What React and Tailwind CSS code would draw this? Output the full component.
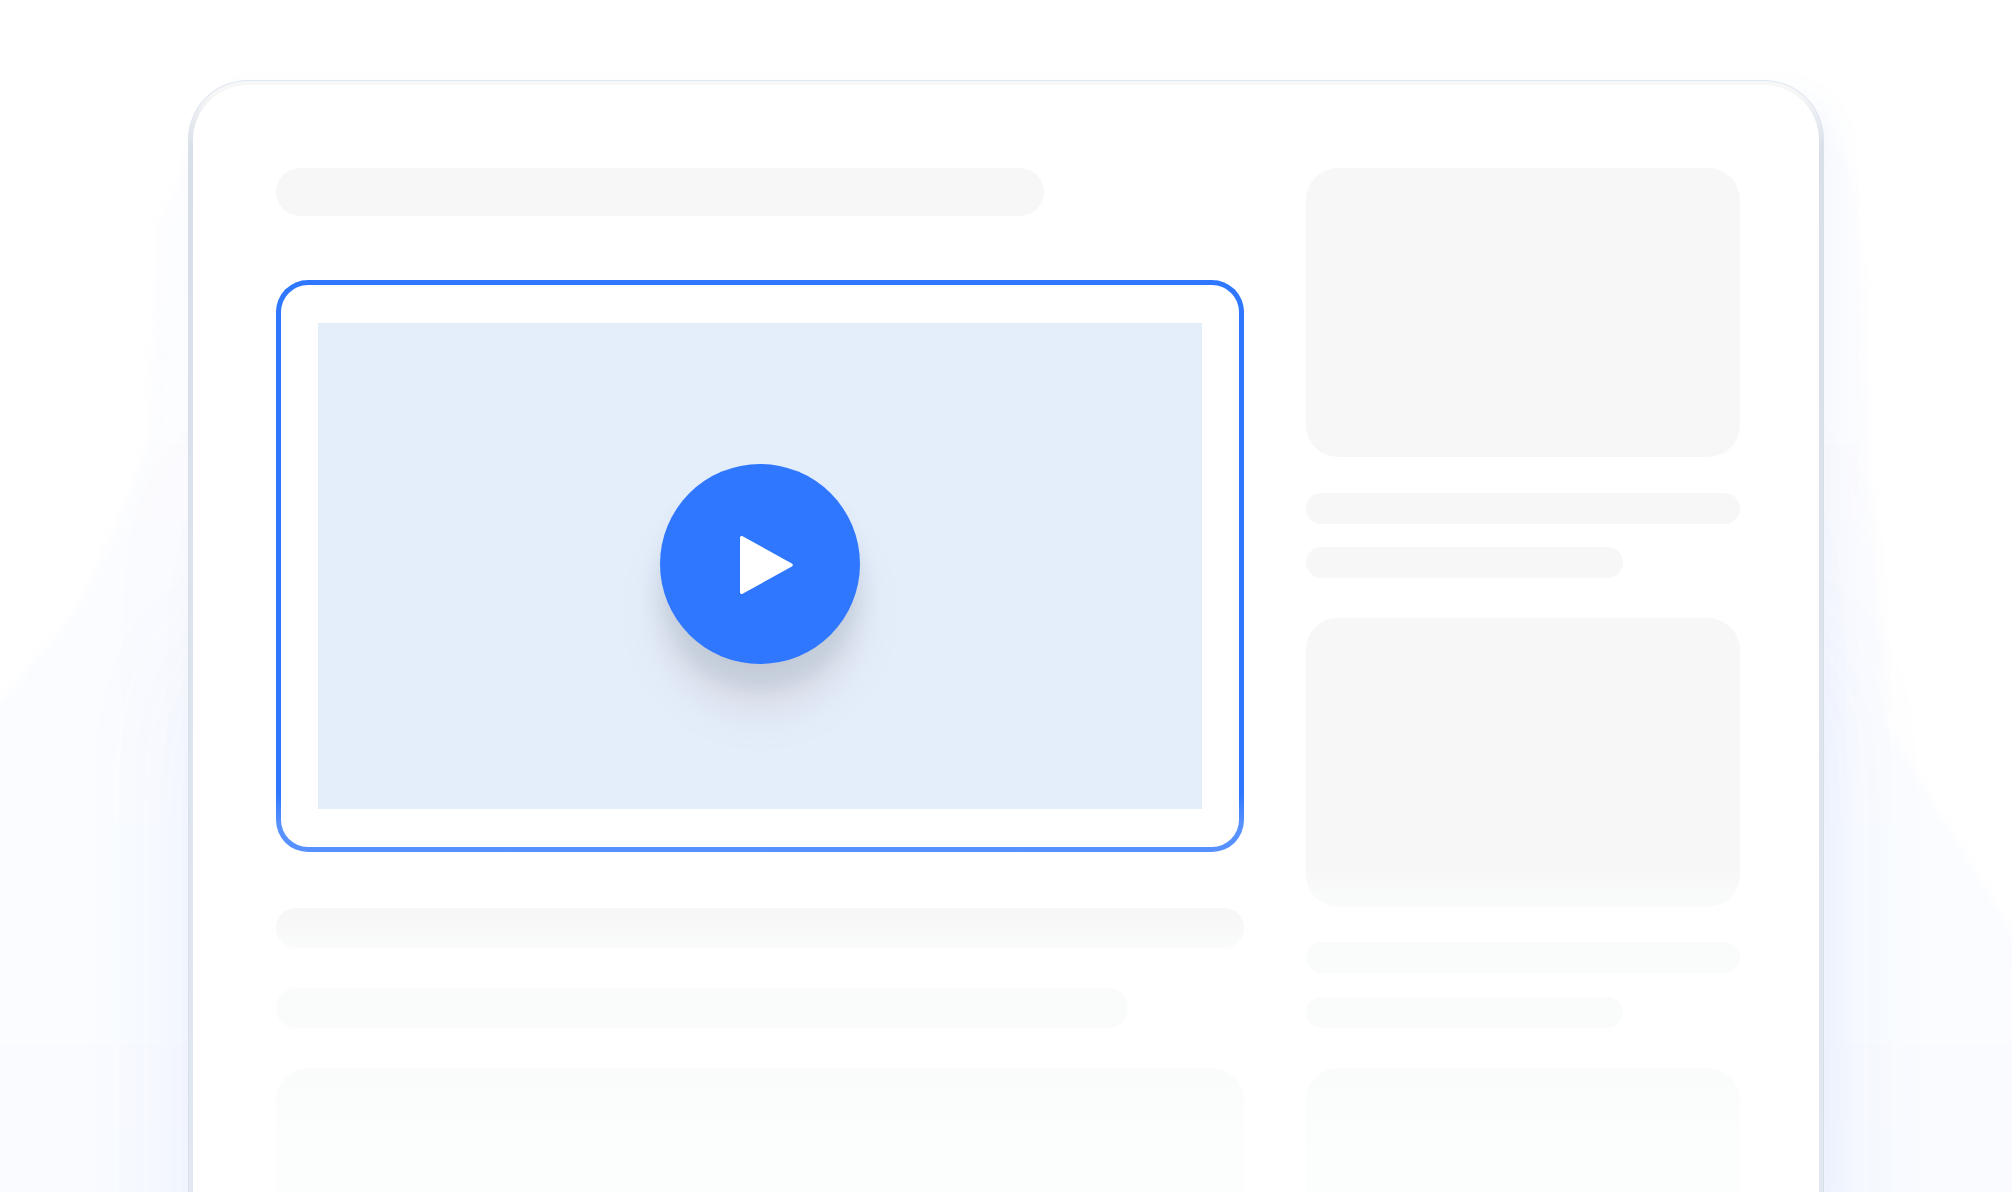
function Bar({ className }) {
  return <div className={`rounded-full ${className}`} />;
}

function VideoFrame() {
  return (
    <div className="mt-16 rounded-[32px] bg-linear-to-b from-[#2f77ff] from-90% to-[#5790ff] to-95% p-[5px]">
      <div className="rounded-[27px] bg-white px-[37px] py-[38px]">
        <div className="flex h-[486px] items-center justify-center bg-[#e4eefb] pb-1">
          <button
            type="button"
            aria-label="Play video"
            className="flex size-[200px] items-center justify-center rounded-full bg-[#2f77ff] pt-0.5 pl-3 shadow-[0_24px_20px_rgba(90,125,155,0.17),0_48px_44px_rgba(150,100,90,0.13)]"
          >
            <svg viewBox="0 0 53 58" className="h-[58px] w-[53px]" aria-hidden="true">
              <path
                d="M0 1.8C0 .3 1.3-.4 2.6.3L51.8 27.4C53.3 28.2 53.3 29.8 51.8 30.6L2.6 57.7C1.3 58.4 0 57.7 0 56.2Z"
                fill="#fff"
              />
            </svg>
          </button>
        </div>
      </div>
    </div>
  );
}

function Article() {
  return (
    <article className="flex flex-col">
      <Bar className="h-12 w-[79.3%] bg-[#f7f7f7]" />
      <VideoFrame />
      <Bar className="mt-14 h-10 bg-linear-to-b from-[#f7f7f7] from-20% to-[#fafbfb]" />
      <Bar className="mt-10 h-10 w-[88%] bg-[#fafcfb]" />
      <div className="mt-10 min-h-[124px] flex-1 rounded-t-[32px] bg-linear-to-b from-[#fafcfb] to-[#fcfefd] to-60%" />
    </article>
  );
}

function Sidebar() {
  return (
    <aside className="flex flex-col">
      <div className="h-[289px] rounded-[32px] bg-[#f7f7f7]" />
      <Bar className="mt-9 h-[31px] bg-[#f7f7f7]" />
      <Bar className="mt-[23px] h-[31px] w-[73%] bg-[#f7f7f7]" />
      <div className="mt-10 h-[289px] rounded-[32px] bg-linear-to-b from-[#f7f7f7] from-86% to-[#fafcfb]" />
      <Bar className="mt-[35px] h-[31px] bg-[#fafcfb]" />
      <Bar className="mt-6 h-[31px] w-[73%] bg-[#fafcfb]" />
      <div className="mt-10 min-h-[124px] flex-1 rounded-t-[32px] bg-linear-to-b from-[#fafcfb] to-[#fcfefd] to-60%" />
    </aside>
  );
}

function Glow() {
  return (
    <div className="pointer-events-none absolute -inset-x-5 top-0 -bottom-5 flex justify-between blur-[5px]" aria-hidden="true">
      <div className="w-[220px] bg-linear-to-b from-[#fdfdff] to-[#f9fbff] [clip-path:polygon(94%_13%,80%_19%,77%_36%,63%_43%,45%_50%,9%_58%,0%_60%,0%_100%,100%_100%,100%_13%)]" />
      <div className="w-[220px] bg-linear-to-b from-[#fdfdff] to-[#f9fbff] [clip-path:polygon(0%_8%,18%_14%,25%_24%,27%_42%,34%_60%,91%_77%,100%_80%,100%_100%,0%_100%)]" />
    </div>
  );
}

export default function App() {
  return (
    <main className="relative flex min-h-screen flex-col overflow-hidden bg-white px-[188px] pt-20">
      <Glow />
      <div className="relative flex flex-1 flex-col rounded-t-[60px] bg-linear-to-b from-[#dfe7f3] to-[#d9dfe8] to-10% px-px pt-px shadow-[0_560px_130px_rgba(70,140,255,0.06),0_360px_160px_rgba(70,120,220,0.02),14px_10px_32px_rgba(70,120,240,0.04)]">
        <div className="flex flex-1 flex-col rounded-t-[59px] bg-linear-to-b from-[#f7f7f7] from-1% via-[#d9dfe8] via-6% to-[#e1e8f2] px-1 pt-1">
          <div className="grid flex-1 grid-cols-[968fr_434fr] gap-x-[62px] rounded-t-[55px] bg-white pt-[83px] pr-[79px] pl-[83px]">
            <Article />
            <Sidebar />
          </div>
        </div>
      </div>
    </main>
  );
}
